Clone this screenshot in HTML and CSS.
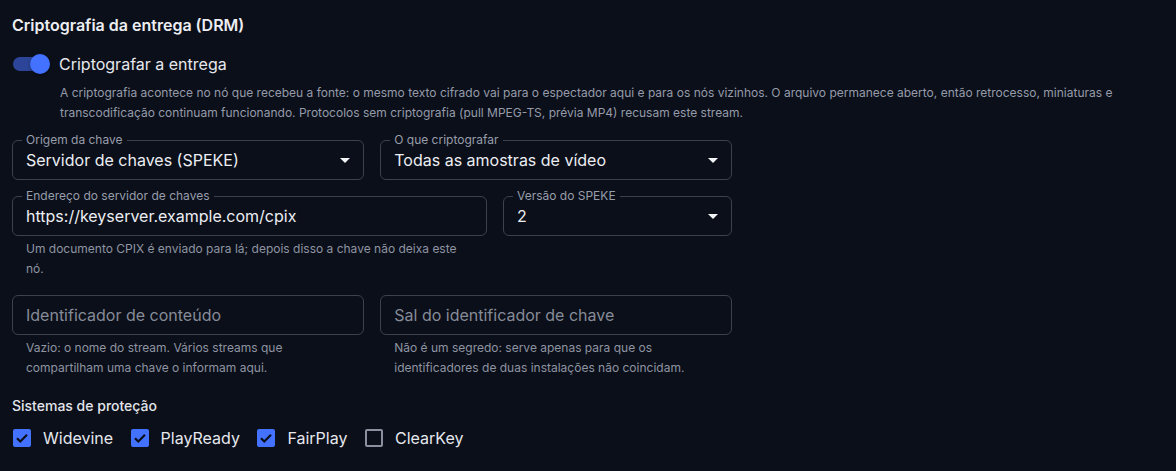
FILE: index.html
```html
<!DOCTYPE html>
<html lang="pt">
<head>
<meta charset="utf-8">
<link rel="stylesheet" href="styles.css">
</head>
<body>
<div class="page">
  <h2 class="title">Criptografia da entrega (DRM)</h2>

  <div class="toggle-row">
    <span class="switch"><span class="track"></span><span class="thumb"></span></span>
    <span class="toggle-label">Criptografar a entrega</span>
  </div>
  <p class="desc">A criptografia acontece no nó que recebeu a fonte: o mesmo texto cifrado vai para o espectador aqui e para os nós vizinhos. O arquivo permanece aberto, então retrocesso, miniaturas e transcodificação continuam funcionando. Protocolos sem criptografia (pull MPEG-TS, prévia MP4) recusam este stream.</p>

  <div class="grid">
    <div class="field span6">
      <div class="box">
        <span class="float">Origem da chave</span>
        <span class="value">Servidor de chaves (SPEKE)</span>
        <svg class="arrow" viewBox="0 0 24 24"><path d="M7 10l5 5 5-5z"/></svg>
      </div>
    </div>
    <div class="field span6">
      <div class="box">
        <span class="float">O que criptografar</span>
        <span class="value">Todas as amostras de vídeo</span>
        <svg class="arrow" viewBox="0 0 24 24"><path d="M7 10l5 5 5-5z"/></svg>
      </div>
    </div>

    <div class="field span8">
      <div class="box">
        <span class="float">Endereço do servidor de chaves</span>
        <span class="value">https://keyserver.example.com/cpix</span>
      </div>
      <p class="helper">Um documento CPIX é enviado para lá; depois disso a chave não deixa este nó.</p>
    </div>
    <div class="field span4">
      <div class="box">
        <span class="float">Versão do SPEKE</span>
        <span class="value">2</span>
        <svg class="arrow" viewBox="0 0 24 24"><path d="M7 10l5 5 5-5z"/></svg>
      </div>
    </div>

    <div class="field span6">
      <div class="box">
        <span class="placeholder">Identificador de conteúdo</span>
      </div>
      <p class="helper">Vazio: o nome do stream. Vários streams que compartilham uma chave o informam aqui.</p>
    </div>
    <div class="field span6">
      <div class="box">
        <span class="placeholder">Sal do identificador de chave</span>
      </div>
      <p class="helper">Não é um segredo: serve apenas para que os identificadores de duas instalações não coincidam.</p>
    </div>
  </div>

  <div class="section-label">Sistemas de proteção</div>
  <div class="checks">
    <label class="check"><span class="cb on"><svg viewBox="0 0 18 18"><path d="M4 9.2l3.3 3.3L14 5.8"/></svg></span>Widevine</label>
    <label class="check"><span class="cb on"><svg viewBox="0 0 18 18"><path d="M4 9.2l3.3 3.3L14 5.8"/></svg></span>PlayReady</label>
    <label class="check"><span class="cb on"><svg viewBox="0 0 18 18"><path d="M4 9.2l3.3 3.3L14 5.8"/></svg></span>FairPlay</label>
    <label class="check"><span class="cb"></span>ClearKey</label>
  </div>
</div>
</body>
</html>
```

FILE: styles.css
```css
* { box-sizing: border-box; }
html, body {
  margin: 0;
  background: #0b0f19;
}
body {
  font-family: Inter, "Noto Sans", "Liberation Sans", sans-serif;
  color: #e6e8ee;
}
.page {
  padding: 13px 12px 0 12px;
  width: 744px;
}
.title {
  margin: 0;
  font-size: 16px;
  line-height: 24px;
  font-weight: 600;
  color: #eceef3;
}
.toggle-row {
  display: flex;
  align-items: center;
  height: 38px;
  margin-top: 8px;
}
.switch {
  position: relative;
  width: 58px;
  height: 38px;
  margin-left: -11px;
  flex: none;
}
.track {
  position: absolute;
  left: 12px;
  top: 12px;
  width: 34px;
  height: 14px;
  border-radius: 7px;
  background: #2c4599;
}
.thumb {
  position: absolute;
  left: 29px;
  top: 9px;
  width: 20px;
  height: 20px;
  border-radius: 50%;
  background: #4272ff;
  box-shadow: 0 1px 3px rgba(0,0,0,0.4);
}
.toggle-label {
  font-size: 16px;
  line-height: 24px;
  color: #e6e8ee;
}
.desc {
  margin: 0 0 0 48px;
  font-size: 12px;
  line-height: 20px;
  color: #959baa;
  width: 1080px;
}
.grid {
  display: grid;
  grid-template-columns: repeat(12, 1fr);
  column-gap: 16.5px;
  row-gap: 16px;
  margin-top: 17px;
  width: 720px;
}
.span6 { grid-column: span 6; }
.span8 { grid-column: span 8; }
.span4 { grid-column: span 4; }
.box {
  position: relative;
  height: 40px;
  border: 1px solid #3c414d;
  border-radius: 6px;
  display: flex;
  align-items: center;
  padding: 0 14px 0 13px;
}
.float {
  position: absolute;
  left: 9px;
  top: -8px;
  padding: 0 4px;
  background: #0b0f19;
  font-size: 12px;
  line-height: 14px;
  color: #979dab;
}
.value {
  font-size: 16px;
  line-height: 24px;
  color: #eceef3;
  white-space: nowrap;
}
.placeholder {
  font-size: 16px;
  line-height: 24px;
  color: #858b98;
  white-space: nowrap;
}
.arrow {
  position: absolute;
  right: 6px;
  top: 7px;
  width: 24px;
  height: 24px;
  fill: #f3f4f7;
}
.helper {
  margin: 3px 14px 0 14px;
  font-size: 12px;
  line-height: 20px;
  color: #8e94a2;
}
.section-label {
  margin-top: 18px;
  font-size: 14px;
  line-height: 20px;
  font-weight: 500;
  color: #e3e5eb;
}
.checks {
  display: flex;
  align-items: center;
  height: 42px;
  margin-top: 1px;
}
.check {
  display: flex;
  align-items: center;
  font-size: 16px;
  line-height: 24px;
  color: #e6e8ee;
  margin-right: 16.5px;
}
.cb {
  width: 18px;
  height: 18px;
  border-radius: 2px;
  border: 2px solid #8a90a0;
  margin: 0 12px 0 1px;
  display: flex;
  align-items: center;
  justify-content: center;
  flex: none;
}
.cb.on {
  background: #4272ff;
  border-color: #4272ff;
}
.cb svg {
  width: 18px;
  height: 18px;
  flex: none;
}
.cb svg path {
  fill: none;
  stroke: #0b0f19;
  stroke-width: 2.2;
}
```
